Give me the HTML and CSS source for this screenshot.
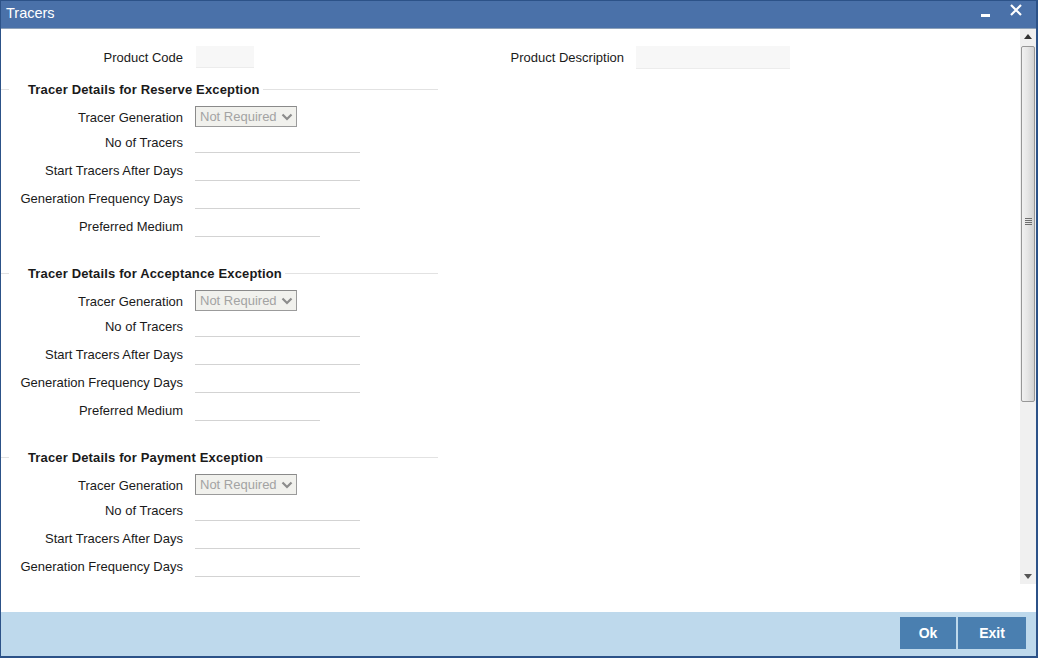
FILE: index.html
```html
<!DOCTYPE html>
<html>
<head>
<meta charset="utf-8">
<title>Tracers</title>
<link rel="stylesheet" href="styles.css">
</head>
<body>
<div class="window">
  <div class="titlebar">
    <span class="title">Tracers</span>
    <div class="controls">
      <span class="minimize"></span>
      <svg class="close" width="12" height="12" viewBox="0 0 12 12"><path d="M1 1L11 11M11 1L1 11" stroke="#fff" stroke-width="2.2"/></svg>
    </div>
  </div>
  <div class="main">
    <div class="pane">
      <div class="form">
        <div class="toprow">
          <label class="lbl">Product Code</label>
          <div class="box code"></div>
          <label class="lbl desc-lbl">Product Description</label>
          <div class="box desc"></div>
        </div>

        <div class="section">
          <div class="legend"><span class="lline"></span><span class="ltext">Tracer Details for Reserve Exception</span><span class="rline"></span></div>
          <div class="row sel-row"><label class="lbl">Tracer Generation</label><div class="select"><span>Not Required</span><svg width="12" height="8" viewBox="0 0 12 8"><path d="M1.5 1.5L6 6L10.5 1.5" fill="none" stroke="#8c8c8c" stroke-width="2.2"/></svg></div></div>
          <div class="row first-input"><label class="lbl">No of Tracers</label><div class="input"></div></div>
          <div class="row"><label class="lbl">Start Tracers After Days</label><div class="input"></div></div>
          <div class="row"><label class="lbl">Generation Frequency Days</label><div class="input"></div></div>
          <div class="row"><label class="lbl">Preferred Medium</label><div class="input short"></div></div>
        </div>

        <div class="section">
          <div class="legend"><span class="lline"></span><span class="ltext">Tracer Details for Acceptance Exception</span><span class="rline"></span></div>
          <div class="row sel-row"><label class="lbl">Tracer Generation</label><div class="select"><span>Not Required</span><svg width="12" height="8" viewBox="0 0 12 8"><path d="M1.5 1.5L6 6L10.5 1.5" fill="none" stroke="#8c8c8c" stroke-width="2.2"/></svg></div></div>
          <div class="row first-input"><label class="lbl">No of Tracers</label><div class="input"></div></div>
          <div class="row"><label class="lbl">Start Tracers After Days</label><div class="input"></div></div>
          <div class="row"><label class="lbl">Generation Frequency Days</label><div class="input"></div></div>
          <div class="row"><label class="lbl">Preferred Medium</label><div class="input short"></div></div>
        </div>

        <div class="section">
          <div class="legend"><span class="lline"></span><span class="ltext">Tracer Details for Payment Exception</span><span class="rline"></span></div>
          <div class="row sel-row"><label class="lbl">Tracer Generation</label><div class="select"><span>Not Required</span><svg width="12" height="8" viewBox="0 0 12 8"><path d="M1.5 1.5L6 6L10.5 1.5" fill="none" stroke="#8c8c8c" stroke-width="2.2"/></svg></div></div>
          <div class="row first-input"><label class="lbl">No of Tracers</label><div class="input"></div></div>
          <div class="row"><label class="lbl">Start Tracers After Days</label><div class="input"></div></div>
          <div class="row"><label class="lbl">Generation Frequency Days</label><div class="input"></div></div>
        </div>
      </div>
      <div class="scrollbar">
        <div class="arrow up"><svg width="8" height="5" viewBox="0 0 8 5"><path d="M0 5L4 0L8 5Z" fill="#333"/></svg></div>
        <div class="track">
          <div class="thumb"><span class="grip"></span></div>
        </div>
        <div class="arrow down"><svg width="8" height="5" viewBox="0 0 8 5"><path d="M0 0L8 0L4 5Z" fill="#555"/></svg></div>
      </div>
    </div>
  </div>
  <div class="footer">
    <button class="btn ok">Ok</button>
    <button class="btn exit">Exit</button>
  </div>
</div>
</body>
</html>
```
FILE: styles.css
```css
* { box-sizing: border-box; }
html, body { margin: 0; padding: 0; background: #fff; }
body {
  width: 1038px;
  height: 658px;
  overflow: hidden;
  font-family: "Liberation Sans", Arial, sans-serif;
  font-size: 13px;
  color: #1a1a1a;
}
.window {
  width: 1038px;
  height: 658px;
  display: flex;
  flex-direction: column;
  border-left: 1px solid #2c5288;
  border-right: 2px solid #2c5288;
  border-bottom: 2px solid #2c5288;
  border-top: 1px solid #2c5288;
}
.titlebar {
  height: 28px;
  flex: none;
  background: #4a71a9;
  border-bottom: 1px solid #8da1b9;
  display: flex;
  align-items: center;
  justify-content: space-between;
  padding: 0 14px 0 5px;
}
.title {
  color: #fff;
  font-size: 14.5px;
  margin-top: -3px;
}
.controls {
  display: flex;
  align-items: center;
  gap: 20px;
  margin-top: -9px;
}
.minimize {
  display: block;
  width: 9px;
  height: 3px;
  background: #fff;
  margin-top: 10px;
}
.close { display: block; }
.main {
  flex: 1;
  background: #fff;
  display: flex;
  flex-direction: column;
}
.pane {
  height: 555px;
  display: flex;
  overflow: hidden;
}
.form {
  flex: 1;
  overflow: hidden;
  padding-top: 17px;
}
.toprow {
  display: flex;
  align-items: center;
  height: 22px;
}
.lbl {
  width: 182px;
  text-align: right;
  flex: none;
  white-space: nowrap;
}
.box {
  height: 22px;
  background: #f7f7f7;
  border-bottom: 1px solid #ececec;
}
.box.code { width: 58px; margin-left: 13px; }
.lbl.desc-lbl { width: 370px; }
.box.desc { width: 154px; margin-left: 12px; height: 23px; }

.section { margin-top: 11px; }
.section + .section { margin-top: 26px; }
.legend {
  width: 437px;
  height: 20px;
  display: flex;
  align-items: center;
}
.lline { width: 8px; height: 1px; background: #e2e2e2; }
.ltext {
  font-weight: bold;
  margin-left: 19px;
  padding-right: 3px;
  white-space: nowrap;
  letter-spacing: 0.15px;
}
.rline { flex: 1; height: 1px; background: #e2e2e2; }

.row {
  display: flex;
  align-items: center;
  height: 22px;
  margin-top: 6px;
}
.row .lbl { padding-top: 1px; }
.row.sel-row { height: 21px; margin-top: 7px; }
.row.first-input { margin-top: 4px; }
.row .lbl + * { margin-left: 12px; }
.input {
  width: 165px;
  height: 22px;
  border-bottom: 1px solid #d3d3d3;
}
.input.short { width: 125px; }
.select {
  width: 102px;
  height: 21px;
  background: #f1f1ed;
  border: 1px solid #9b9b9b;
  border-top-color: #8a8a8a;
  border-left-color: #8a8a8a;
  display: flex;
  align-items: center;
  justify-content: space-between;
  padding: 0 3px 0 4px;
  color: #a3a3a3;
  font-size: 13px;
}
.select svg { display: block; }

.scrollbar {
  width: 16px;
  flex: none;
  display: flex;
  flex-direction: column;
  background: #f0f0f0;
}
.arrow {
  height: 17px;
  flex: none;
  display: flex;
  align-items: center;
  justify-content: center;
}
.arrow.up { padding-bottom: 2px; }
.arrow.down { padding-top: 2px; }
.track { flex: 1; }
.thumb {
  height: 356px;
  margin: 0 1px;
  border: 1px solid #979797;
  border-radius: 2px;
  background: linear-gradient(to right, #f1f1f1 0%, #e6e6e6 45%, #d2d2d2 100%);
  display: flex;
  align-items: center;
  justify-content: center;
}
.grip {
  width: 7px;
  height: 8px;
  background: repeating-linear-gradient(to bottom, #6e6e6e 0, #6e6e6e 1px, transparent 1px, transparent 2px);
  margin-top: -4px;
}

.footer {
  height: 44px;
  flex: none;
  background: #bed9ec;
  display: flex;
  justify-content: flex-end;
  align-items: flex-start;
  padding: 5px 10px 0 0;
  gap: 2px;
}
.btn {
  height: 32px;
  border: none;
  background: #4a7fb0;
  color: #fff;
  font-family: "Liberation Sans", Arial, sans-serif;
  font-weight: bold;
  font-size: 14px;
  padding: 0;
  margin: 0;
}
.btn.ok { width: 56px; }
.btn.exit { width: 68px; }
```
